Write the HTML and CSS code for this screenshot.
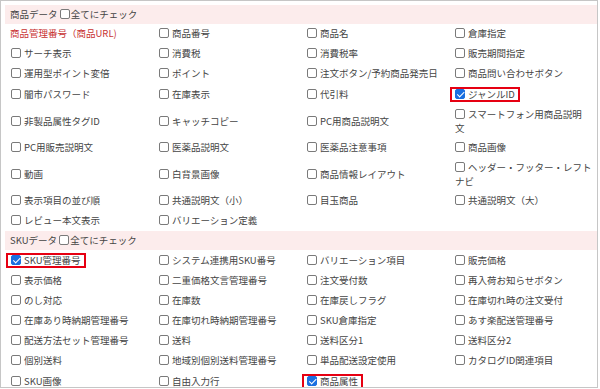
FILE: index.html
```html
<!DOCTYPE html>
<html lang="ja">
<head>
    <meta charset="UTF-8">
    <title>項目選択</title>
    <link rel="stylesheet" href="styles.css">
</head>
<body>

    <div class="panel">
        <!-- 商品データ -->
        <table class="fields">
            <colgroup><col><col><col><col></colgroup>
            <thead>
                <tr>
                    <th colspan="4">商品データ <label><input type="checkbox">全てにチェック</label></th>
                </tr>
            </thead>
            <tbody>
                <tr>
                    <td><span class="key">商品管理番号（商品URL)</span></td>
                    <td><label><input type="checkbox">商品番号</label></td>
                    <td><label><input type="checkbox">商品名</label></td>
                    <td><label><input type="checkbox">倉庫指定</label></td>
                </tr>
                <tr>
                    <td><label><input type="checkbox">サーチ表示</label></td>
                    <td><label><input type="checkbox">消費税</label></td>
                    <td><label><input type="checkbox">消費税率</label></td>
                    <td><label><input type="checkbox">販売期間指定</label></td>
                </tr>
                <tr>
                    <td><label><input type="checkbox">運用型ポイント変倍</label></td>
                    <td><label><input type="checkbox">ポイント</label></td>
                    <td><label><input type="checkbox">注文ボタン/予約商品発売日</label></td>
                    <td><label><input type="checkbox">商品問い合わせボタン</label></td>
                </tr>
                <tr>
                    <td><label><input type="checkbox">闇市パスワード</label></td>
                    <td><label><input type="checkbox">在庫表示</label></td>
                    <td><label><input type="checkbox">代引料</label></td>
                    <td><label class="mark"><input type="checkbox" checked>ジャンルID</label></td>
                </tr>
                <tr class="tall">
                    <td><label><input type="checkbox">非製品属性タグID</label></td>
                    <td><label><input type="checkbox">キャッチコピー</label></td>
                    <td><label><input type="checkbox">PC用商品説明文</label></td>
                    <td><label><input type="checkbox">スマートフォン用商品説明<br>文</label></td>
                </tr>
                <tr>
                    <td><label><input type="checkbox">PC用販売説明文</label></td>
                    <td><label><input type="checkbox">医薬品説明文</label></td>
                    <td><label><input type="checkbox">医薬品注意事項</label></td>
                    <td><label><input type="checkbox">商品画像</label></td>
                </tr>
                <tr class="tall">
                    <td><label><input type="checkbox">動画</label></td>
                    <td><label><input type="checkbox">白背景画像</label></td>
                    <td><label><input type="checkbox">商品情報レイアウト</label></td>
                    <td><label><input type="checkbox">ヘッダー・フッター・レフト<br>ナビ</label></td>
                </tr>
                <tr>
                    <td><label><input type="checkbox">表示項目の並び順</label></td>
                    <td><label><input type="checkbox">共通説明文（小）</label></td>
                    <td><label><input type="checkbox">目玉商品</label></td>
                    <td><label><input type="checkbox">共通説明文（大）</label></td>
                </tr>
                <tr>
                    <td><label><input type="checkbox">レビュー本文表示</label></td>
                    <td><label><input type="checkbox">バリエーション定義</label></td>
                    <td></td>
                    <td></td>
                </tr>
            </tbody>
        </table>

        <!-- SKUデータ -->
        <table class="fields">
            <colgroup><col><col><col><col></colgroup>
            <thead>
                <tr>
                    <th colspan="4">SKUデータ <label><input type="checkbox">全てにチェック</label></th>
                </tr>
            </thead>
            <tbody>
                <tr>
                    <td><label class="mark"><input type="checkbox" checked>SKU管理番号</label></td>
                    <td><label><input type="checkbox">システム連携用SKU番号</label></td>
                    <td><label><input type="checkbox">バリエーション項目</label></td>
                    <td><label><input type="checkbox">販売価格</label></td>
                </tr>
                <tr>
                    <td><label><input type="checkbox">表示価格</label></td>
                    <td><label><input type="checkbox">二重価格文言管理番号</label></td>
                    <td><label><input type="checkbox">注文受付数</label></td>
                    <td><label><input type="checkbox">再入荷お知らせボタン</label></td>
                </tr>
                <tr>
                    <td><label><input type="checkbox">のし対応</label></td>
                    <td><label><input type="checkbox">在庫数</label></td>
                    <td><label><input type="checkbox">在庫戻しフラグ</label></td>
                    <td><label><input type="checkbox">在庫切れ時の注文受付</label></td>
                </tr>
                <tr>
                    <td><label><input type="checkbox">在庫あり時納期管理番号</label></td>
                    <td><label><input type="checkbox">在庫切れ時納期管理番号</label></td>
                    <td><label><input type="checkbox">SKU倉庫指定</label></td>
                    <td><label><input type="checkbox">あす楽配送管理番号</label></td>
                </tr>
                <tr>
                    <td><label><input type="checkbox">配送方法セット管理番号</label></td>
                    <td><label><input type="checkbox">送料</label></td>
                    <td><label><input type="checkbox">送料区分1</label></td>
                    <td><label><input type="checkbox">送料区分2</label></td>
                </tr>
                <tr>
                    <td><label><input type="checkbox">個別送料</label></td>
                    <td><label><input type="checkbox">地域別個別送料管理番号</label></td>
                    <td><label><input type="checkbox">単品配送設定使用</label></td>
                    <td><label><input type="checkbox">カタログID関連項目</label></td>
                </tr>
                <tr>
                    <td><label><input type="checkbox">SKU画像</label></td>
                    <td><label><input type="checkbox">自由入力行</label></td>
                    <td><label class="mark"><input type="checkbox" checked>商品属性</label></td>
                    <td></td>
                </tr>
            </tbody>
        </table>
    </div>

</body>
</html>
```

FILE: styles.css
```css
body {
    margin: 0;
    font-family: "Noto Sans CJK JP", "Noto Sans", sans-serif;
    font-size: 9.5px;
    color: #444444;
    background-color: #ffffff;
}

/* 外枠 */
.panel {
    width: 598px;
    height: 388px;
    box-sizing: border-box;
    border: 1px solid #c6c6c6;
    padding: 4px 0 0 4px;
    overflow: hidden;
}

.fields {
    width: 592px;
    table-layout: fixed;
    border-collapse: collapse;
}

.fields col {
    width: 148px;
}

/* セクション見出し（ピンクの帯） */
.fields th {
    height: 19px;
    padding: 0 5px;
    background-color: #fcecec;
    text-align: left;
    font-weight: normal;
    line-height: 13px;
}

.fields th input[type="checkbox"] {
    margin-right: 1px;
}

.fields tbody tr {
    height: 20px;
}

.fields td {
    padding: 3px 0 3px 6px;
    line-height: 13.5px;
    vertical-align: middle;
    white-space: nowrap;
}

.key {
    color: #c83232;
    margin-left: -1px;
}

/* チェックボックス */
input[type="checkbox"] {
    appearance: none;
    -webkit-appearance: none;
    position: relative;
    width: 10px;
    height: 10px;
    margin: 0 3px 0 0;
    box-sizing: border-box;
    border: 1px solid #7a7a7a;
    border-radius: 2px;
    background-color: #ffffff;
    vertical-align: -1px;
}

input[type="checkbox"]:checked {
    background-color: #1a6fe0;
    border-color: #1a6fe0;
}

input[type="checkbox"]:checked::after {
    content: "";
    position: absolute;
    left: 2.5px;
    top: 0;
    width: 2.5px;
    height: 5.5px;
    border: solid #ffffff;
    border-width: 0 1.5px 1.5px 0;
    transform: rotate(45deg);
}

/* 赤枠で強調した項目 */
.mark {
    display: inline-block;
    border: 2px solid #e60012;
    padding: 0 3px;
    margin-left: -5px;
    line-height: 11px;
    vertical-align: middle;
}
```
